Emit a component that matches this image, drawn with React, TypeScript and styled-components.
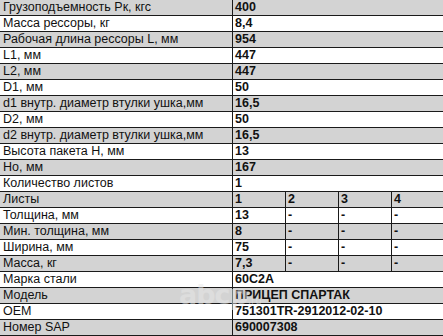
import React from "react";
import styled, { createGlobalStyle } from "styled-components";

const Global = createGlobalStyle`
  html, body { margin: 0; padding: 0; background: #fff; }
  body { font-family: "Liberation Sans", Arial, Helvetica, sans-serif; }
`;

const Wrap = styled.div`
  position: relative;
  width: 443px;
  height: 336px;
  overflow: hidden;
`;

const Table = styled.table`
  width: 443px;
  table-layout: fixed;
  border-collapse: separate;
  border-spacing: 0;
  font-size: 12.5px;
  color: #111;
`;

const Col = styled.col<{ $w: number }>`
  width: ${(p) => p.$w}px;
`;

const Row = styled.tr<{ $shade: boolean }>`
  background: ${(p) => (p.$shade ? "#d3d3d3" : "#ffffff")};
`;

const Label = styled.td`
  height: 15px;
  padding: 0 0 0 3px;
  line-height: 15px;
  border-bottom: 1px solid #1a1a1a;
  white-space: nowrap;
  overflow: hidden;
  vertical-align: middle;
`;

const Value = styled.td`
  height: 15px;
  padding: 0 0 0 2px;
  line-height: 15px;
  font-weight: bold;
  border-bottom: 1px solid #1a1a1a;
  border-left: 1px solid #1a1a1a;
  white-space: nowrap;
  overflow: hidden;
  vertical-align: middle;
`;

const Watermark = styled.div`
  position: absolute;
  left: 179px;
  top: 279px;
  font-family: "DejaVu Sans", "Liberation Sans", sans-serif;
  font-weight: bold;
  font-size: 27px;
  letter-spacing: -1px;
  color: rgba(232, 232, 232, 0.5);
  pointer-events: none;
  user-select: none;
`;

const WatermarkTld = styled.span`
  font-size: 10px;
  letter-spacing: 0;
  font-weight: normal;
`;

type Item = { label: string; values: string[] };

const widths = [232, 53, 53, 53, 52];

const rows: Item[] = [
  { label: "Грузоподъемность Рк, кгс", values: ["400"] },
  { label: "Масса рессоры, кг", values: ["8,4"] },
  { label: "Рабочая длина рессоры L, мм", values: ["954"] },
  { label: "L1, мм", values: ["447"] },
  { label: "L2, мм", values: ["447"] },
  { label: "D1, мм", values: ["50"] },
  { label: "d1 внутр. диаметр втулки ушка,мм", values: ["16,5"] },
  { label: "D2, мм", values: ["50"] },
  { label: "d2 внутр. диаметр втулки ушка,мм", values: ["16,5"] },
  { label: "Высота пакета H, мм", values: ["13"] },
  { label: "Ho, мм", values: ["167"] },
  { label: "Количество листов", values: ["1"] },
  { label: "Листы", values: ["1", "2", "3", "4"] },
  { label: "Толщина, мм", values: ["13", "-", "-", "-"] },
  { label: "Мин. толщина, мм", values: ["8", "-", "-", "-"] },
  { label: "Ширина, мм", values: ["75", "-", "-", "-"] },
  { label: "Масса, кг", values: ["7,3", "-", "-", "-"] },
  { label: "Марка стали", values: ["60C2A"] },
  { label: "Модель", values: ["ПРИЦЕП СПАРТАК"] },
  { label: "OEM", values: ["751301TR-2912012-02-10"] },
  { label: "Номер SAP", values: ["690007308"] },
];

export default function App() {
  return (
    <Wrap>
      <Global />
      <Table>
        <colgroup>
          {widths.map((w, i) => (
            <Col key={i} $w={w} />
          ))}
        </colgroup>
        <tbody>
          {rows.map((r, i) => (
            <Row key={i} $shade={i % 2 === 0}>
              <Label>{r.label}</Label>
              {r.values.length === 1 ? (
                <Value colSpan={4}>{r.values[0]}</Value>
              ) : (
                r.values.map((v, j) => <Value key={j}>{v}</Value>)
              )}
            </Row>
          ))}
        </tbody>
      </Table>
      <Watermark>
        abcp<WatermarkTld>.ru</WatermarkTld>
      </Watermark>
    </Wrap>
  );
}
